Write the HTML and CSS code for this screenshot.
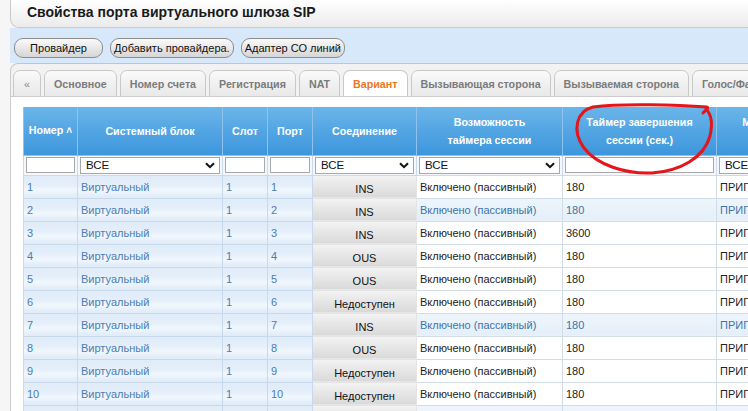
FILE: index.html
```html
<!DOCTYPE html>
<html lang="ru">
<head>
<meta charset="utf-8">
<title>Свойства порта виртуального шлюза SIP</title>
<link rel="stylesheet" href="styles.css">
</head>
<body>
<div class="wrap">
  <div class="titlebar"><h1>Свойства порта виртуального шлюза SIP</h1></div>
  <div class="btnbar">
    <button class="btn btn-wide">Провайдер</button>
    <button class="btn">Добавить провайдера.</button>
    <button class="btn">Адаптер СО линий</button>
  </div>
  <div class="tabbar">
    <div class="tab tab-nav">«</div>
    <div class="tab">Основное</div>
    <div class="tab">Номер счета</div>
    <div class="tab">Регистрация</div>
    <div class="tab">NAT</div>
    <div class="tab active">Вариант</div>
    <div class="tab">Вызывающая сторона</div>
    <div class="tab">Вызываемая сторона</div>
    <div class="tab">Голос/Факс</div>
  </div>
  <div class="content">
    <table class="grid">
      <colgroup>
        <col class="c-num"><col class="c-unit"><col class="c-slot"><col class="c-port"><col class="c-conn"><col class="c-cap"><col class="c-timer"><col class="c-method">
      </colgroup>
      <thead>
        <tr class="head">
          <th>Номер&nbsp;<span class="sort">˄</span></th>
          <th>Системный блок</th>
          <th>Слот</th>
          <th>Порт</th>
          <th>Соединение</th>
          <th>Возможность<br>таймера сессии</th>
          <th>Таймер завершения<br>сессии (сек.)</th>
          <th>Метод обновления<br>сессии</th>
        </tr>
        <tr class="filter">
          <td><div class="inp"></div></td>
          <td><div class="sel"><span>ВСЕ</span><svg width="10" height="7" viewBox="0 0 10 7"><path d="M1 1.2 L5 5.2 L9 1.2" fill="none" stroke="#111" stroke-width="2"/></svg></div></td>
          <td><div class="inp"></div></td>
          <td><div class="inp"></div></td>
          <td><div class="sel"><span>ВСЕ</span><svg width="10" height="7" viewBox="0 0 10 7"><path d="M1 1.2 L5 5.2 L9 1.2" fill="none" stroke="#111" stroke-width="2"/></svg></div></td>
          <td><div class="sel"><span>ВСЕ</span><svg width="10" height="7" viewBox="0 0 10 7"><path d="M1 1.2 L5 5.2 L9 1.2" fill="none" stroke="#111" stroke-width="2"/></svg></div></td>
          <td><div class="inp"></div></td>
          <td><div class="sel"><span>ВСЕ</span><svg width="10" height="7" viewBox="0 0 10 7"><path d="M1 1.2 L5 5.2 L9 1.2" fill="none" stroke="#111" stroke-width="2"/></svg></div></td>
        </tr>
      </thead>
      <tbody>
        <tr><td class="lc">1</td><td class="lc">Виртуальный</td><td class="lc">1</td><td class="lc">1</td><td class="conn">INS</td><td>Включено (пассивный)</td><td>180</td><td>ПРИГЛАШЕНИЕ</td></tr>
        <tr class="hl"><td class="lc">2</td><td class="lc">Виртуальный</td><td class="lc">1</td><td class="lc">2</td><td class="conn">INS</td><td>Включено (пассивный)</td><td>180</td><td>ПРИГЛАШЕНИЕ</td></tr>
        <tr><td class="lc">3</td><td class="lc">Виртуальный</td><td class="lc">1</td><td class="lc">3</td><td class="conn">INS</td><td>Включено (пассивный)</td><td>3600</td><td>ПРИГЛАШЕНИЕ</td></tr>
        <tr><td class="lc">4</td><td class="lc">Виртуальный</td><td class="lc">1</td><td class="lc">4</td><td class="conn">OUS</td><td>Включено (пассивный)</td><td>180</td><td>ПРИГЛАШЕНИЕ</td></tr>
        <tr><td class="lc">5</td><td class="lc">Виртуальный</td><td class="lc">1</td><td class="lc">5</td><td class="conn">OUS</td><td>Включено (пассивный)</td><td>180</td><td>ПРИГЛАШЕНИЕ</td></tr>
        <tr><td class="lc">6</td><td class="lc">Виртуальный</td><td class="lc">1</td><td class="lc">6</td><td class="conn">Недоступен</td><td>Включено (пассивный)</td><td>180</td><td>ПРИГЛАШЕНИЕ</td></tr>
        <tr class="hl"><td class="lc">7</td><td class="lc">Виртуальный</td><td class="lc">1</td><td class="lc">7</td><td class="conn">INS</td><td>Включено (пассивный)</td><td>180</td><td>ПРИГЛАШЕНИЕ</td></tr>
        <tr><td class="lc">8</td><td class="lc">Виртуальный</td><td class="lc">1</td><td class="lc">8</td><td class="conn">OUS</td><td>Включено (пассивный)</td><td>180</td><td>ПРИГЛАШЕНИЕ</td></tr>
        <tr><td class="lc">9</td><td class="lc">Виртуальный</td><td class="lc">1</td><td class="lc">9</td><td class="conn">Недоступен</td><td>Включено (пассивный)</td><td>180</td><td>ПРИГЛАШЕНИЕ</td></tr>
        <tr><td class="lc">10</td><td class="lc">Виртуальный</td><td class="lc">1</td><td class="lc">10</td><td class="conn">Недоступен</td><td>Включено (пассивный)</td><td>180</td><td>ПРИГЛАШЕНИЕ</td></tr>
        <tr class="hl"><td class="lc">11</td><td class="lc">Виртуальный</td><td class="lc">1</td><td class="lc">11</td><td class="conn">INS</td><td>Включено (пассивный)</td><td>180</td><td>ПРИГЛАШЕНИЕ</td></tr>
      </tbody>
    </table>
  </div>
</div>
<svg class="annot" width="748" height="411" viewBox="0 0 748 411">
  <path d="M703 113 C706 110 709 108 707 107 C680 105 622 103 593 107 C577 111 571 130 584 148 C597 165 625 174 652 173 C680 171 704 158 710 136 C713 123 711 114 706 109" fill="none" stroke="#e3161c" stroke-width="3" stroke-linecap="round" stroke-linejoin="round"/>
</svg>
</body>
</html>
```

FILE: styles.css
```css
* { box-sizing: border-box; }

body {
  margin: 0;
  width: 748px;
  height: 411px;
  overflow: hidden;
  position: relative;
  background: #f6f6f6;
  font-family: "Liberation Sans", Arial, sans-serif;
  font-size: 11px;
  color: #1e1e1e;
}

.wrap {
  margin-left: 10px;
  width: 760px;
}

.titlebar {
  height: 28px;
  border: 1px solid #c9c9c9;
  border-top: none;
  border-radius: 0 0 0 9px;
  background: linear-gradient(#ffffff, #f3f3f3 60%, #ebebeb);
}

.titlebar h1 {
  margin: 0;
  padding-left: 16px;
  font-size: 14px;
  line-height: 25px;
  font-weight: bold;
  color: #1a1a1a;
}

.btnbar {
  display: flex;
  gap: 7px;
  padding: 10px 4px 5px;
  background: #d6e8f9;
}

.btn {
  height: 20px;
  padding: 0 3px;
  border: 1px solid #8d8d8d;
  border-radius: 9px;
  background: linear-gradient(#fafafa, #e6e6e6 55%, #d6d6d6);
  font-family: inherit;
  font-size: 11px;
  color: #111;
  line-height: 18px;
}

.btn-wide { width: 89px; }

.tabbar {
  display: flex;
  align-items: flex-end;
  gap: 3px;
  height: 34px;
  padding: 5px 0 0 2px;
  border-top: 1px solid #c4c4c4;
  border-bottom: 1px solid #cccccc;
  border-left: 1px solid #cccccc;
  border-top-left-radius: 8px;
  background: #f2f2f2;
  overflow: hidden;
}

.tab {
  flex-shrink: 0;
  height: 27px;
  margin-bottom: -1px;
  padding: 0 9px;
  border: 1px solid #c8c8c8;
  border-radius: 7px 7px 0 0;
  background: linear-gradient(#fbfbfb, #f0f0f0 50%, #e9e9e9);
  font-size: 10.7px;
  font-weight: bold;
  line-height: 26px;
  color: #7b7b7b;
  white-space: nowrap;
}

.tab-nav {
  width: 28px;
  padding: 0;
  text-align: center;
  font-weight: normal;
  color: #8a8a8a;
}

.tab.active {
  background: #ffffff;
  border-bottom-color: #ffffff;
  color: #e8781f;
}

.content {
  height: 330px;
  padding: 10px 0 0 12px;
  border-left: 1px solid #cccccc;
  background: #ffffff;
}

.grid {
  border-collapse: collapse;
  table-layout: fixed;
  width: 845px;
}

.c-num { width: 54px; }
.c-unit { width: 145px; }
.c-slot { width: 45px; }
.c-port { width: 45px; }
.c-conn { width: 104px; }
.c-cap { width: 146px; }
.c-timer { width: 154px; }
.c-method { width: 152px; }

.grid th {
  height: 48px;
  padding: 0 4px;
  border: 1px solid #8fc3ec;
  border-top: none;
  background: linear-gradient(#6ab5e8 0%, #55a7e4 45%, #3d96dc 100%);
  color: #ffffff;
  font-size: 10.7px;
  font-weight: bold;
  line-height: 18px;
  text-align: center;
  white-space: nowrap;
  overflow: hidden;
}

.grid th .sort {
  font-size: 10px;
}

.filter td {
  height: 20px;
  padding: 0 2px;
  border: 1px solid #c9dbeb;
  background: #f4f8fc;
}

.inp {
  height: 16px;
  border: 1px solid #a8a8a8;
  background: #ffffff;
}

.sel {
  display: flex;
  align-items: center;
  justify-content: space-between;
  height: 17px;
  padding: 0 4px 0 5px;
  border: 1px solid #a8a8a8;
  background: #ffffff;
  font-size: 11.5px;
  color: #111;
}

tbody td {
  height: 23px;
  padding: 0 3px;
  border: 1px solid #d2dce6;
  background: #ffffff;
  color: #222;
  white-space: nowrap;
  overflow: hidden;
  vertical-align: middle;
}

tbody td.lc {
  border-color: #c7d9ea;
  background: linear-gradient(#dfebf8 0%, #e5effa 45%, #f1f7fd 68%, #dfebf8 100%);
  color: #4a7db4;
}

tbody td.conn {
  padding-top: 4px;
  border-color: #e4e4e4;
  background: linear-gradient(#f3f3f3 0%, #e7e7e7 45%, #d9d9d9 100%);
  text-align: center;
  color: #111;
}

tbody tr.hl td:not(.lc):not(.conn) {
  background: linear-gradient(#eef5fc, #e4eff9);
  color: #3f73a8;
}

.annot {
  position: absolute;
  left: 0;
  top: 0;
  pointer-events: none;
}
```
